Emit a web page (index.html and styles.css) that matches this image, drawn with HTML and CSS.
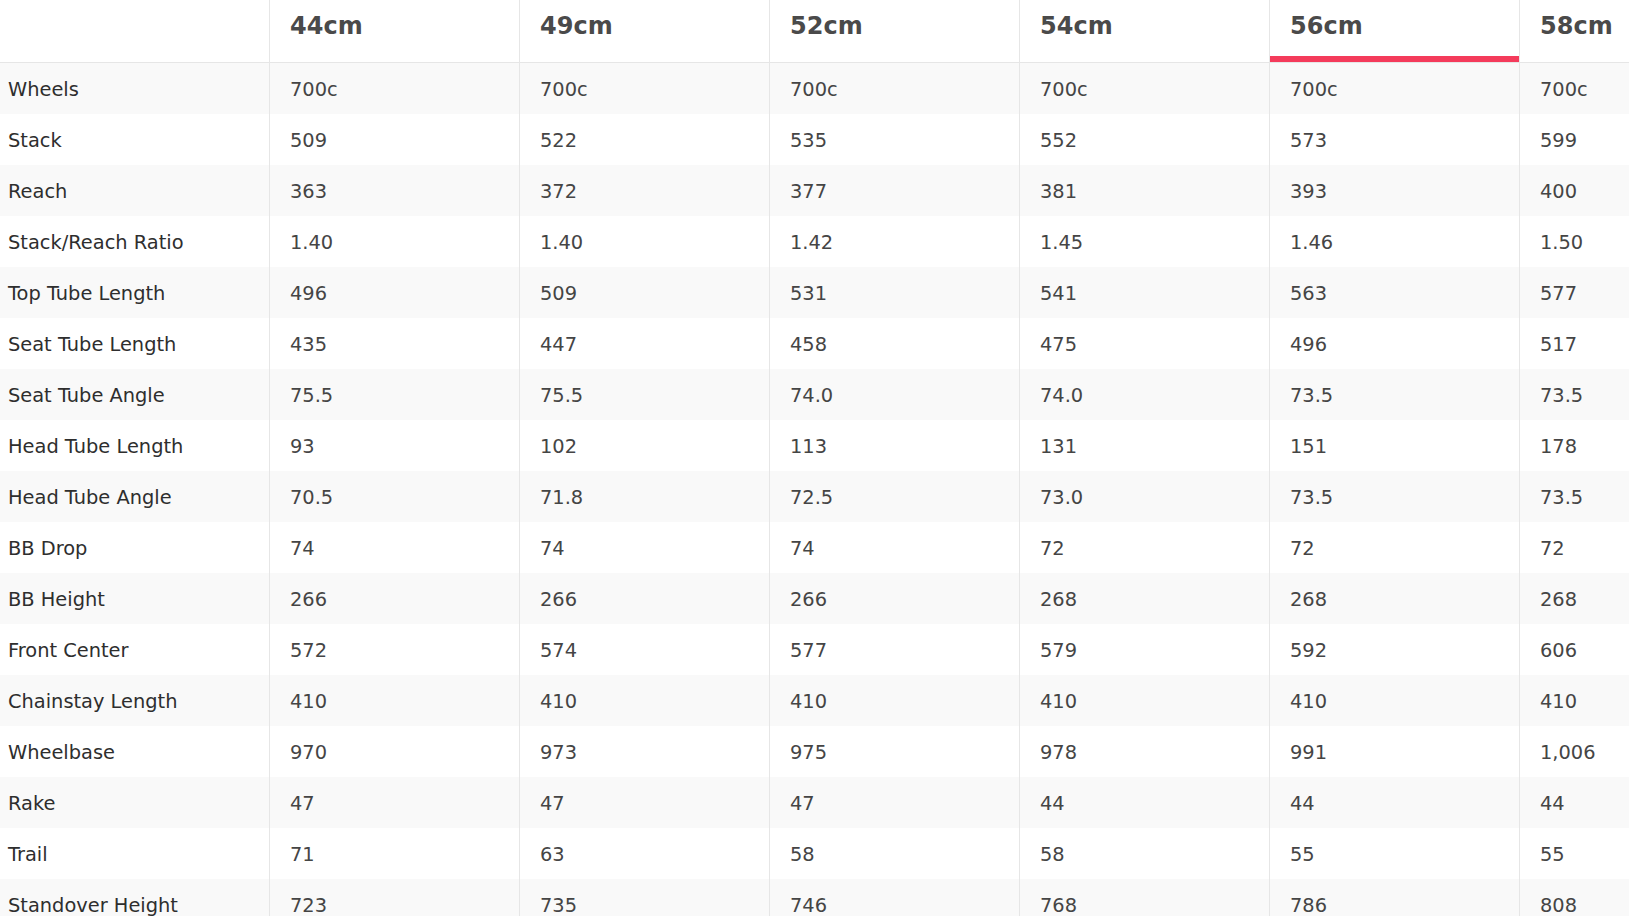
FILE: index.html
```html
<!DOCTYPE html>
<html lang="en">
<head>
<meta charset="utf-8">
<title>Geometry</title>
<link rel="stylesheet" href="styles.css">
</head>
<body>
<div class="geo-wrap">
<table class="geo">
<colgroup>
<col class="c-label">
<col class="c-size"><col class="c-size"><col class="c-size"><col class="c-size"><col class="c-size"><col class="c-size">
</colgroup>
<thead>
<tr>
<th class="label-head"></th>
<th>44cm</th><th>49cm</th><th>52cm</th><th>54cm</th><th class="active">56cm</th><th>58cm</th>
</tr>
</thead>
<tbody>
<tr><th>Wheels</th><td>700c</td><td>700c</td><td>700c</td><td>700c</td><td>700c</td><td>700c</td></tr>
<tr><th>Stack</th><td>509</td><td>522</td><td>535</td><td>552</td><td>573</td><td>599</td></tr>
<tr><th>Reach</th><td>363</td><td>372</td><td>377</td><td>381</td><td>393</td><td>400</td></tr>
<tr><th>Stack/Reach Ratio</th><td>1.40</td><td>1.40</td><td>1.42</td><td>1.45</td><td>1.46</td><td>1.50</td></tr>
<tr><th>Top Tube Length</th><td>496</td><td>509</td><td>531</td><td>541</td><td>563</td><td>577</td></tr>
<tr><th>Seat Tube Length</th><td>435</td><td>447</td><td>458</td><td>475</td><td>496</td><td>517</td></tr>
<tr><th>Seat Tube Angle</th><td>75.5</td><td>75.5</td><td>74.0</td><td>74.0</td><td>73.5</td><td>73.5</td></tr>
<tr><th>Head Tube Length</th><td>93</td><td>102</td><td>113</td><td>131</td><td>151</td><td>178</td></tr>
<tr><th>Head Tube Angle</th><td>70.5</td><td>71.8</td><td>72.5</td><td>73.0</td><td>73.5</td><td>73.5</td></tr>
<tr><th>BB Drop</th><td>74</td><td>74</td><td>74</td><td>72</td><td>72</td><td>72</td></tr>
<tr><th>BB Height</th><td>266</td><td>266</td><td>266</td><td>268</td><td>268</td><td>268</td></tr>
<tr><th>Front Center</th><td>572</td><td>574</td><td>577</td><td>579</td><td>592</td><td>606</td></tr>
<tr><th>Chainstay Length</th><td>410</td><td>410</td><td>410</td><td>410</td><td>410</td><td>410</td></tr>
<tr><th>Wheelbase</th><td>970</td><td>973</td><td>975</td><td>978</td><td>991</td><td>1,006</td></tr>
<tr><th>Rake</th><td>47</td><td>47</td><td>47</td><td>44</td><td>44</td><td>44</td></tr>
<tr><th>Trail</th><td>71</td><td>63</td><td>58</td><td>58</td><td>55</td><td>55</td></tr>
<tr><th>Standover Height</th><td>723</td><td>735</td><td>746</td><td>768</td><td>786</td><td>808</td></tr>
</tbody>
</table>
</div>
</body>
</html>
```

FILE: styles.css
```css
html, body {
  margin: 0;
  padding: 0;
  background: #ffffff;
}

body {
  font-family: "DejaVu Sans", "Open Sans", sans-serif;
  color: #444444;
  overflow: hidden;
}

.geo-wrap {
  width: 100vw;
  height: 100vh;
  overflow: hidden;
}

.geo {
  table-layout: fixed;
  width: 1769px;
  border-collapse: separate;
  border-spacing: 0;
}

.c-label { width: 269px; }
.c-size { width: 250px; }

.geo thead th {
  box-sizing: border-box;
  height: 63px;
  padding: 12px 20px 0;
  vertical-align: top;
  text-align: left;
  font-size: 24px;
  line-height: 28px;
  font-weight: bold;
  color: #4a4a4a;
  border-left: 1px solid #e6e6e6;
  border-bottom: 1px solid #e6e6e6;
}

.geo thead th.label-head {
  border-left: none;
}

.geo thead th.active {
  box-shadow: inset 0 -6px 0 #f43b5b;
}

.geo tbody th,
.geo tbody td {
  box-sizing: border-box;
  height: 51px;
  padding: 2px 20px 0;
  vertical-align: middle;
  text-align: left;
  font-size: 19.4px;
  line-height: 24px;
  font-weight: normal;
  white-space: nowrap;
}

.geo tbody th {
  padding-left: 8px;
  color: #2e2e2e;
}

.geo tbody td {
  color: #454545;
  border-left: 1px solid #e6e6e6;
}

.geo tbody tr:nth-child(odd) {
  background: #f9f9f9;
}
```
